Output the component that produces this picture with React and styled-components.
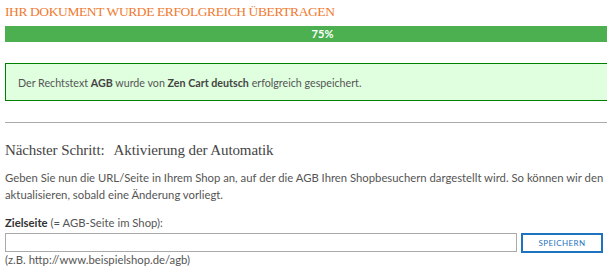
import React from 'react'
import styled, { createGlobalStyle } from 'styled-components'

const GlobalStyle = createGlobalStyle`
  html, body {
    margin: 0;
    padding: 0;
    background: #fff;
    overflow: hidden;
  }
  body {
    font-family: Lato, 'Open Sans', sans-serif;
    color: #555;
  }
`

const Page = styled.div`
  width: 635px;
  padding: 4px 5px 0;
`

const Title = styled.h2`
  margin: 0 0 6px;
  font-family: 'Liberation Serif', serif;
  font-weight: normal;
  font-size: 13.5px;
  line-height: 16px;
  color: #f07a2e;
  letter-spacing: -0.4px;
`

const Progress = styled.div`
  height: 16px;
  background: #e8e8e8;
`

const ProgressFill = styled.div`
  height: 100%;
  background: #4caf50;
  color: #fff;
  font-size: 11px;
  font-weight: bold;
  line-height: 16px;
  text-align: center;
`

const SuccessBox = styled.div`
  margin-top: 21px;
  border: 1px solid #008000;
  background: #dfffdf;
  padding: 0 12px;
  height: 36px;
  display: flex;
  align-items: center;
  font-size: 10.7px;
  color: #555;
  b {
    color: #444;
  }
`

const Divider = styled.hr`
  margin: 21px 0 0;
  border: 0;
  border-top: 1px solid #aaa;
`

const StepHeading = styled.h3`
  margin: 19px 0 0;
  font-family: 'Liberation Serif', serif;
  font-weight: normal;
  font-size: 15px;
  color: #444;
  display: flex;
  gap: 9px;
  letter-spacing: -0.1px;
`

const Text = styled.p`
  margin: 10px 0 0;
  font-size: 11.3px;
  line-height: 17px;
  color: #555;
`

const Label = styled.div`
  margin-top: 13px;
  font-size: 11.3px;
  line-height: 14px;
  color: #555;
  b {
    color: #333;
  }
`

const FormRow = styled.div`
  margin-top: 3px;
  display: flex;
  gap: 4px;
  align-items: flex-start;
`

const UrlInput = styled.input`
  box-sizing: border-box;
  width: 512px;
  height: 19px;
  border: 1px solid #aaa;
  padding: 0 4px;
  margin: 0;
  font-family: inherit;
`

const SaveButton = styled.button`
  box-sizing: border-box;
  width: 82px;
  height: 20px;
  border: 2px solid #1e73be;
  background: #fff;
  color: #1e73be;
  font-family: inherit;
  font-size: 8px;
  letter-spacing: 0.4px;
  padding: 0;
  cursor: pointer;
`

const Hint = styled.div`
  margin-top: 0;
  font-size: 11.3px;
  line-height: 14px;
  color: #555;
`

export default function App() {
  const percent = 75
  return (
    <Page>
      <GlobalStyle />
      <Title>IHR DOKUMENT WURDE ERFOLGREICH ÜBERTRAGEN</Title>
      <Progress>
        <ProgressFill style={{ width: '100%' }}>{percent}%</ProgressFill>
      </Progress>
      <SuccessBox>
        <span>
          Der Rechtstext <b>AGB</b> wurde von <b>Zen Cart deutsch</b> erfolgreich gespeichert.
        </span>
      </SuccessBox>
      <Divider />
      <StepHeading>
        <span>Nächster Schritt:</span>
        <span>Aktivierung der Automatik</span>
      </StepHeading>
      <Text>
        Geben Sie nun die URL/Seite in Ihrem Shop an, auf der die AGB Ihren Shopbesuchern
        dargestellt wird. So können wir den aktualisieren, sobald eine Änderung vorliegt.
      </Text>
      <Label>
        <b>Zielseite</b> (= AGB-Seite im Shop):
      </Label>
      <FormRow>
        <UrlInput type="text" />
        <SaveButton type="button">SPEICHERN</SaveButton>
      </FormRow>
      <Hint>(z.B. http://www.beispielshop.de/agb)</Hint>
    </Page>
  )
}
